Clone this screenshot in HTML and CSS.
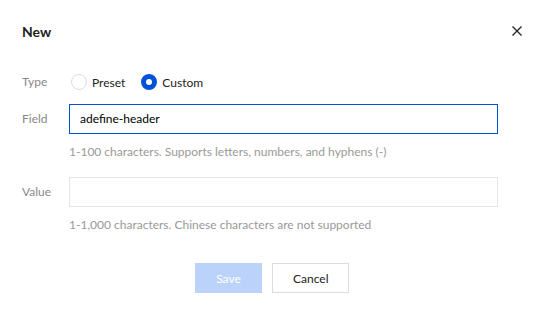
FILE: index.html
```html
<!DOCTYPE html>
<html lang="en">
<head>
    <meta charset="UTF-8">
    <meta name="viewport" content="width=device-width, initial-scale=1.0">
    <title>New</title>
    <link rel="stylesheet" href="styles.css">
</head>
<body>
    <div class="dialog">
        <div class="dialog-header">
            <h2 class="dialog-title">New</h2>
            <button class="close-button" aria-label="Close">
                <svg width="12" height="12" viewBox="0 0 12 12">
                    <path d="M1.5 1.5 L10.5 10.5 M10.5 1.5 L1.5 10.5" stroke="#222" stroke-width="1.3" fill="none"/>
                </svg>
            </button>
        </div>

        <div class="form-row row-type">
            <label class="form-label">Type</label>
            <div class="radio-group">
                <label class="radio"><span class="radio-dot"></span>Preset</label>
                <label class="radio checked"><span class="radio-dot"></span>Custom</label>
            </div>
        </div>

        <div class="form-row">
            <label class="form-label">Field</label>
            <div class="form-control">
                <div class="input focused">adefine-header</div>
                <p class="help">1-100 characters. Supports letters, numbers, and hyphens (-)</p>
            </div>
        </div>

        <div class="form-row">
            <label class="form-label">Value</label>
            <div class="form-control">
                <div class="input"></div>
                <p class="help">1-1,000 characters. Chinese characters are not supported</p>
            </div>
        </div>

        <div class="dialog-footer">
            <button class="btn btn-primary" disabled>Save</button>
            <button class="btn btn-default">Cancel</button>
        </div>
    </div>
</body>
</html>
```

FILE: styles.css
```css
body {
    margin: 0;
    background: #fff;
    font-family: 'Lato', 'Open Sans', sans-serif;
    font-size: 12px;
    color: #000;
}

.dialog {
    width: 544px;
    height: 316px;
    box-sizing: border-box;
    padding: 19px 22px 0 22px;
}

.dialog-header {
    display: flex;
    justify-content: space-between;
    align-items: center;
    height: 24px;
}

.dialog-title {
    margin: 0;
    font-size: 14px;
    font-weight: 700;
    color: #222;
}

.close-button {
    border: none;
    background: none;
    padding: 0;
    margin-right: -1px;
    width: 12px;
    height: 12px;
    display: flex;
    cursor: pointer;
}

.form-row {
    display: flex;
    align-items: flex-start;
}

.form-label {
    width: 47px;
    flex: none;
    color: #888;
    line-height: 30px;
}

.row-type {
    margin-top: 24px;
    margin-bottom: 7px;
}

.radio-group {
    display: flex;
    gap: 16px;
    height: 30px;
    align-items: center;
    margin-left: 2px;
}

.radio {
    display: flex;
    align-items: center;
    gap: 5px;
    color: #222;
}

.radio-dot {
    width: 16px;
    height: 16px;
    box-sizing: border-box;
    border-radius: 50%;
    border: 1px solid #ddd;
    background: #fff;
}

.radio.checked .radio-dot {
    border: 5px solid #0052d9;
}

.form-control {
    width: 429px;
}

.input {
    height: 30px;
    box-sizing: border-box;
    border: 1px solid #e4e4e9;
    padding: 0 10px;
    line-height: 28px;
    color: #000;
}

.input.focused {
    border-color: #0052d9;
}

.help {
    margin: 0;
    color: #999;
    line-height: 18px;
    padding: 9px 0 16px;
}

.dialog-footer {
    display: flex;
    justify-content: center;
    gap: 10px;
    margin-top: 13px;
}

.btn {
    height: 30px;
    padding: 0 20px;
    font-family: inherit;
    font-size: 12px;
    border-radius: 0;
}

.btn-primary {
    background: #bbd3fb;
    color: #fff;
    border: none;
    width: 67px;
}

.btn-default {
    background: #fff;
    color: #222;
    border: 1px solid #dcdcdc;
    width: 77px;
}
```
